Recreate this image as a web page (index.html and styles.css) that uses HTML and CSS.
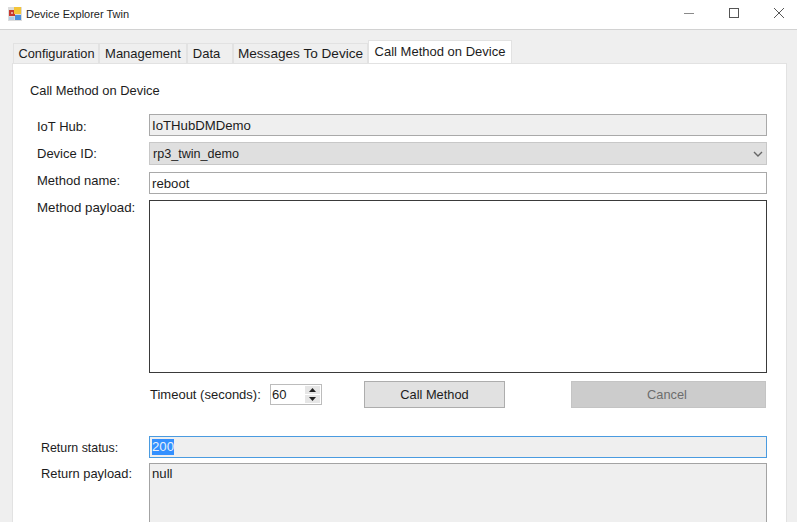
FILE: index.html
```html
<!DOCTYPE html>
<html lang="en">
<head>
<meta charset="utf-8">
<title>Device Explorer Twin</title>
<link rel="stylesheet" href="styles.css">
</head>
<body>
<div class="window">
  <header class="titlebar">
    <svg class="app-icon" width="14" height="14" viewBox="0 0 14 14">
      <rect x="0" y="0" width="14" height="14" fill="#dcdcdc"/>
      <rect x="1" y="3" width="6" height="6" fill="#c8382e"/>
      <rect x="3" y="5" width="2" height="2" fill="#e8a29c"/>
      <rect x="6" y="0" width="7" height="7" fill="#f3c53a"/>
      <rect x="7" y="8" width="6" height="5" fill="#4a8fdc"/>
      <rect x="1" y="10" width="5" height="3" fill="#b4cbe6"/>
    </svg>
    <span class="title">Device Explorer Twin</span>
    <div class="controls">
      <svg class="ctl" width="12" height="12" viewBox="0 0 12 12"><path d="M1 6.5H11" stroke="#8a8a8a" stroke-width="1"/></svg>
      <svg class="ctl" width="12" height="12" viewBox="0 0 12 12"><rect x="1.5" y="1.5" width="9" height="9" fill="none" stroke="#555" stroke-width="1"/></svg>
      <svg class="ctl" width="12" height="12" viewBox="0 0 12 12"><path d="M1 1L11 11M11 1L1 11" stroke="#444" stroke-width="0.9"/></svg>
    </div>
  </header>
  <main class="client">
    <nav class="tabs">
      <span class="tab tab-config">Configuration</span>
      <span class="tab tab-mgmt">Management</span>
      <span class="tab tab-data">Data</span>
      <span class="tab tab-msg">Messages To Device</span>
      <span class="tab tab-active">Call Method on Device</span>
    </nav>
    <section class="panel">
      <h1 class="heading">Call Method on Device</h1>
      <div class="row row-hub">
        <label class="lbl">IoT Hub:</label>
        <div class="field readonly">IoTHubDMDemo</div>
      </div>
      <div class="row row-device">
        <label class="lbl">Device ID:</label>
        <div class="field combo">
          <span>rp3_twin_demo</span>
          <svg width="10" height="6" viewBox="0 0 10 6"><path d="M1 1L5 5L9 1" fill="none" stroke="#666" stroke-width="1.4"/></svg>
        </div>
      </div>
      <div class="row row-method">
        <label class="lbl">Method name:</label>
        <div class="field">reboot</div>
      </div>
      <div class="row row-payload">
        <label class="lbl">Method payload:</label>
        <div class="field textarea"></div>
      </div>
      <div class="row row-actions">
        <span class="lbl"></span>
        <div class="actions">
          <span class="timeout-label">Timeout (seconds):</span>
          <div class="spin">
            <span class="spin-value">60</span>
            <div class="spin-btns">
              <span class="spin-btn"><svg width="7" height="4" viewBox="0 0 7 4"><path d="M3.5 0L7 4H0Z" fill="#222"/></svg></span>
              <span class="spin-btn"><svg width="7" height="4" viewBox="0 0 7 4"><path d="M0 0H7L3.5 4Z" fill="#222"/></svg></span>
            </div>
          </div>
          <button class="btn btn-call" type="button">Call Method</button>
          <button class="btn btn-cancel" type="button">Cancel</button>
        </div>
      </div>
      <div class="row row-status">
        <label class="lbl lbl-indent">Return status:</label>
        <div class="field readonly focused"><span class="selected">200</span></div>
      </div>
      <div class="row row-return">
        <label class="lbl lbl-indent">Return payload:</label>
        <div class="field readonly textarea-ro">null</div>
      </div>
    </section>
  </main>
</div>
</body>
</html>
```
FILE: styles.css
```css
* { box-sizing: border-box; }
html, body { margin: 0; padding: 0; height: 522px; overflow: hidden; background: #fff; }
body { font-family: "Liberation Sans", Arial, sans-serif; font-size: 13px; color: #1c1c1c; }
.window { width: 797px; height: 522px; display: flex; flex-direction: column; }
.titlebar { height: 30px; flex: none; display: flex; align-items: center; padding-left: 8px; background: #fff; border-bottom: 1px solid #d2d2d2; }
.app-icon { flex: none; margin-bottom: 1px; }
.title { margin-left: 4px; font-size: 11px; margin-bottom: 1px; }
.controls { margin-left: auto; display: flex; align-items: center; gap: 33px; padding-right: 12px; margin-bottom: 3px; }
.ctl { display: block; }
.client { flex: 1; min-height: 0; background: #efefef; padding: 10px 10px 0 12px; display: flex; flex-direction: column; }
.tabs { height: 23px; flex: none; display: flex; align-items: flex-end; padding-left: 1px; }
.tab { height: 20px; line-height: 19px; background: #efefef; border: 1px solid #e2e2e2; border-bottom: 0; text-align: center; white-space: nowrap; font-size: 13px; }
.tab-config { width: 86px; font-size: 12.8px; padding-left: 1px; }
.tab-mgmt { width: 88px; }
.tab-data { width: 46px; padding-right: 7px; }
.tab-msg { width: 135px; font-size: 13.6px; }
.tab-active { width: 144px; height: 23px; line-height: 21px; background: #fff; }
.panel { flex: 1; min-height: 0; background: #fff; border: 1px solid #e2e2e2; border-bottom: 0; padding: 0 19px 0 17px; overflow: hidden; }
.heading { margin: 18px 0 0; font-weight: 400; font-size: 12.9px; line-height: 18px; height: 32px; }
.row { display: flex; align-items: flex-start; }
.lbl { width: 119px; flex: none; padding-left: 7px; font-size: 13px; line-height: 16px; padding-top: 5px; }
.lbl-indent { padding-left: 11px; }
.field { flex: 1; min-width: 0; height: 22px; background: #fff; border: 1px solid #a9a9a9; padding: 1px 0 0 2px; line-height: 20px; font-size: 13.2px; }
.readonly { background: #efefef; }
.row-hub { height: 28px; }
.row-device { height: 30px; }
.row-method { height: 28px; }
.row-payload { height: 181px; }
.row-actions { height: 55px; }
.row-status { height: 27px; }
.row-device .lbl { padding-top: 4px; }
.row-method .lbl { padding-top: 1px; }
.row-payload .lbl { padding-top: 0; font-size: 13.3px; }
.row-status .lbl { padding-top: 4px; font-size: 12.4px; }
.row-return .lbl { padding-top: 3px; font-size: 12.9px; }
.combo { height: 23px; background: #dfdfdf; border-color: #c8c8c8; display: flex; align-items: center; justify-content: space-between; padding: 0 3px; font-size: 12.6px; }
.textarea { height: 173px; border-color: #3a3a3a; }
.actions { flex: 1; min-width: 0; display: flex; align-items: center; height: 27px; padding: 0 1px; }
.timeout-label { width: 120px; flex: none; }
.spin { width: 52px; height: 21px; flex: none; border: 1px solid #bcbcbc; display: flex; align-items: center; justify-content: space-between; padding-left: 1px; background: #fff; }
.spin-btns { width: 15px; height: 17px; margin-right: 1px; display: flex; flex-direction: column; gap: 1px; }
.spin-btn { flex: 1; background: #e6e6e6; display: flex; align-items: center; justify-content: center; }
.spin-btn svg { display: block; }
.btn { height: 27px; font: inherit; font-size: 12.8px; padding: 0; border-radius: 0; }
.btn-call { width: 141px; margin-left: 42px; background: #e1e1e1; border: 1px solid #adadad; color: #1c1c1c; }
.btn-cancel { width: 195px; margin-left: auto; background: #cccccc; border: 1px solid #c4c4c4; color: #6d6d6d; padding-right: 3px; }
.focused { border-color: #4a9be0; padding-top: 0; }
.selected { background: #3390ff; color: #e8f0fa; display: inline-block; line-height: 16px; vertical-align: middle; margin-top: -2px; }
.textarea-ro { height: 70px; line-height: 18px; padding-top: 1px; border-color: #a3a3a3; }
```
